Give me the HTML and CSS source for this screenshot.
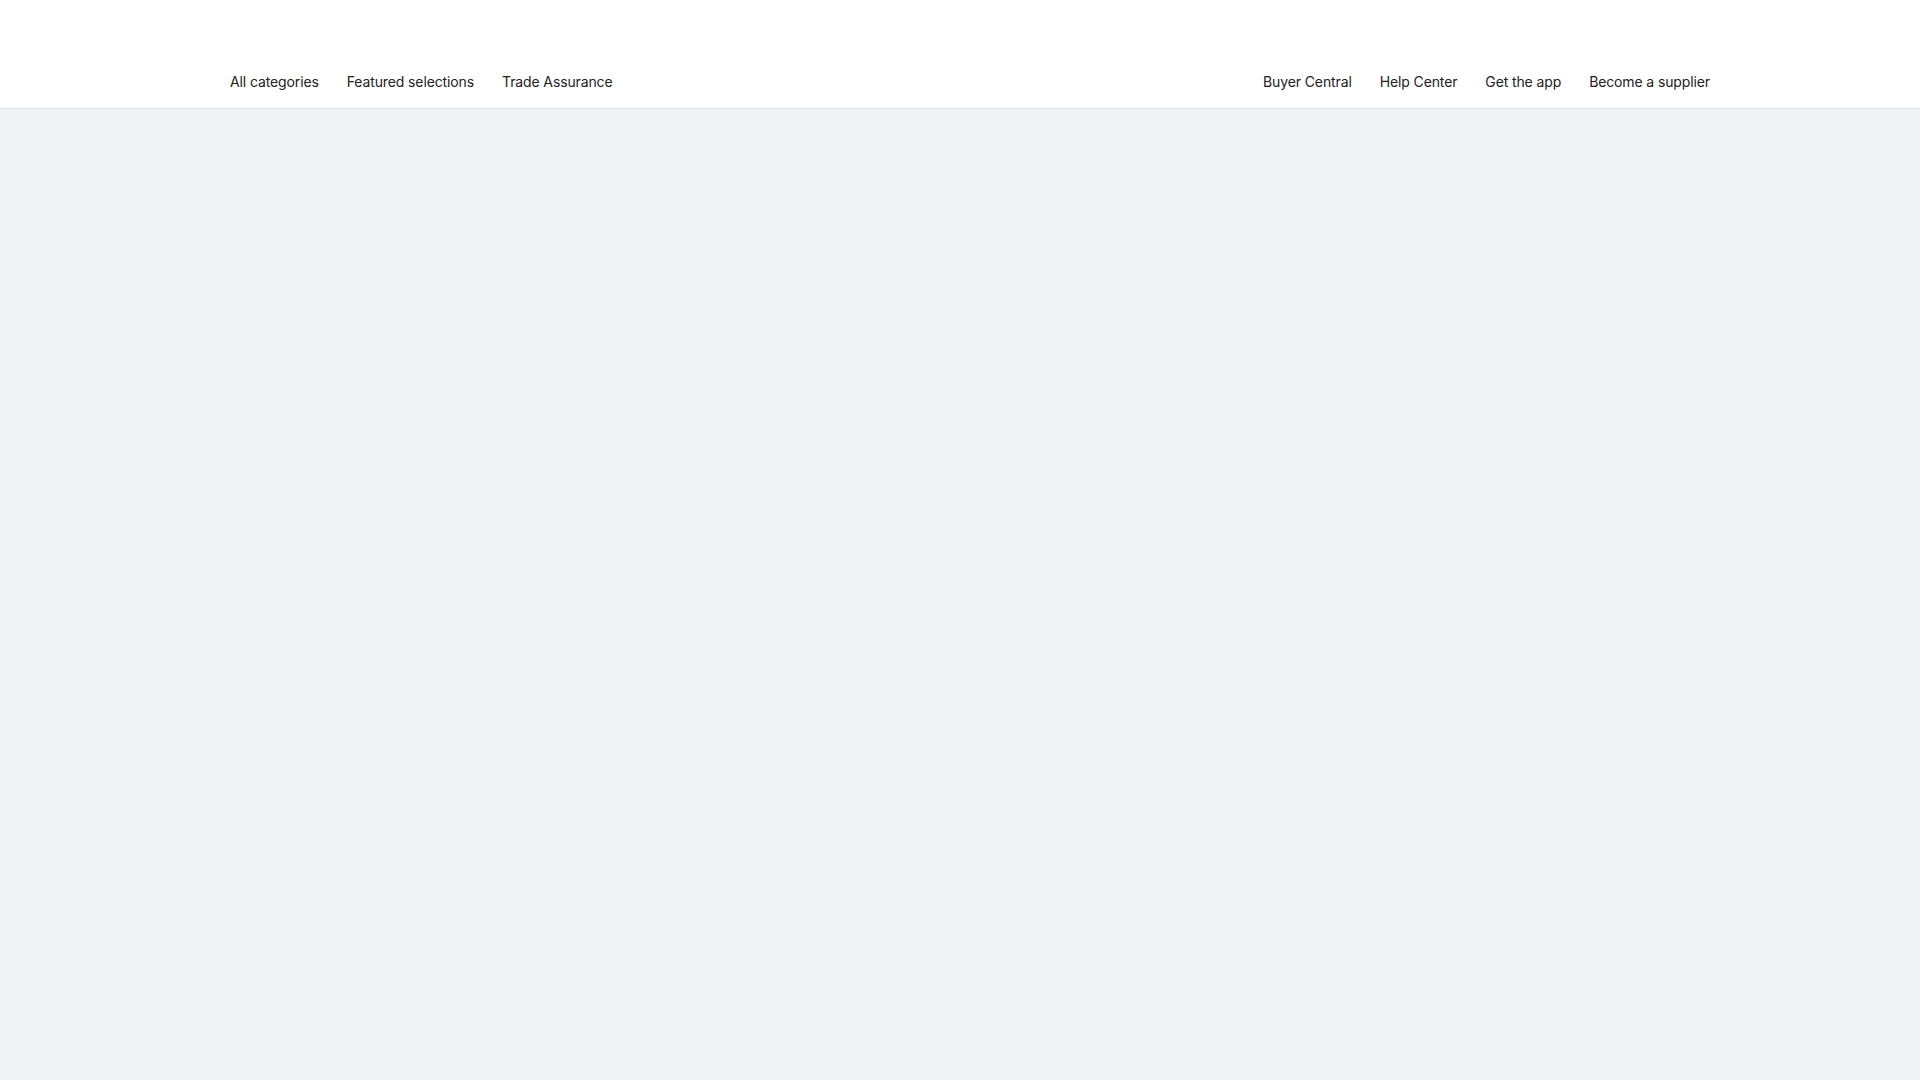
FILE: index.html
```html
<!DOCTYPE html>
<html>
  <head>
    <meta charset="UTF-8" />
    <title>All categories</title>
    <link rel="stylesheet" href="styles.css">
  </head>
  <body>
    <header class="header">
      <div class="header-inner">
        <nav class="nav nav-left">
          <a href="#" class="nav-link">All categories</a>
          <a href="#" class="nav-link">Featured selections</a>
          <a href="#" class="nav-link">Trade Assurance</a>
        </nav>
        <nav class="nav nav-right">
          <a href="#" class="nav-link">Buyer Central</a>
          <a href="#" class="nav-link">Help Center</a>
          <a href="#" class="nav-link">Get the app</a>
          <a href="#" class="nav-link">Become a supplier</a>
        </nav>
      </div>
    </header>

    <main class="content"></main>
  </body>
</html>
```

FILE: styles.css
```css
html,
body {
  height: 100%;
}

body {
  margin: 0;
  display: flex;
  flex-direction: column;
  background-color: #f2f3f7;
  color: #222;
  font-family: Inter, "Noto Sans", sans-serif;
  font-size: 14px;
}

.header {
  background-color: #fff;
  border-bottom: 1px solid #dddfe3;
}

.header-inner {
  display: flex;
  align-items: center;
  justify-content: space-between;
  height: 108px;
  padding: 56px 210px 0 230px;
  box-sizing: border-box;
}

.nav {
  display: flex;
  gap: 28px;
}

.nav-link {
  color: inherit;
  text-decoration: none;
  line-height: 20px;
  letter-spacing: -0.12px;
}

.content {
  flex: 1;
}
```
